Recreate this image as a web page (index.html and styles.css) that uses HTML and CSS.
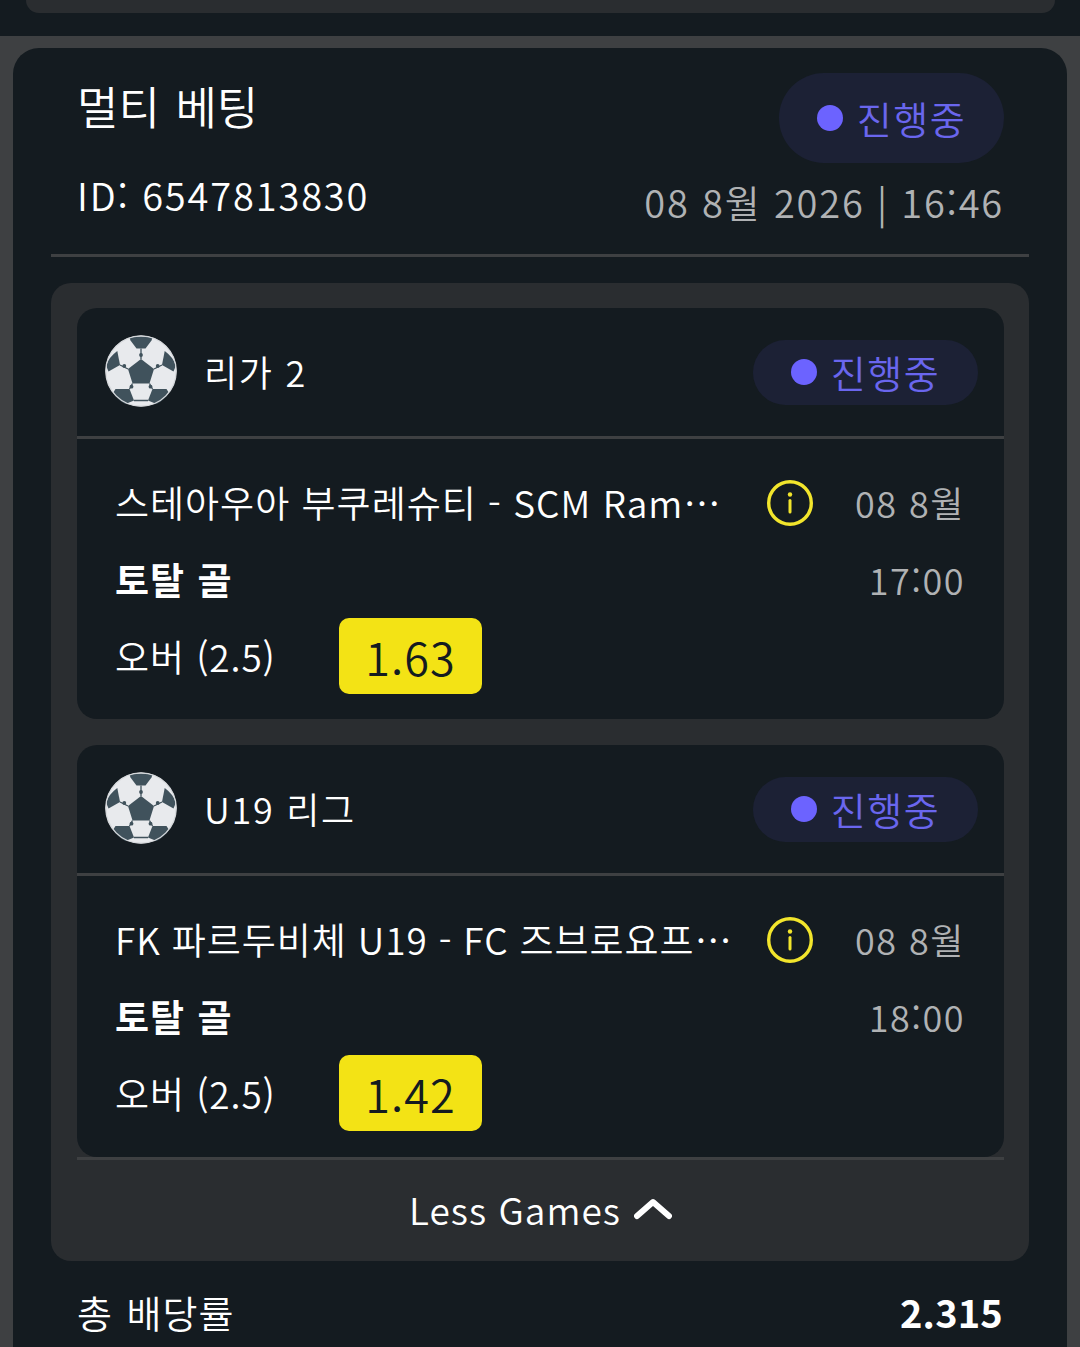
FILE: index.html
```html
<!DOCTYPE html>
<html lang="ko">
<head>
<meta charset="utf-8">
<title>멀티 베팅</title>
<link rel="stylesheet" href="styles.css">
</head>
<body>
<svg class="defs" width="0" height="0" aria-hidden="true">
  <defs>
    <symbol id="ball" viewBox="0 0 72 72">
      <circle cx="36" cy="36" r="35.5" fill="#e8eaed"/>
      <g fill="#40525c">
        <path d="M36 24 49 34 44.500 48.500H27.500L23 34Z"/>
        <path d="M24.500 2.500Q36 .5 47.500 2.500L46.500 5.500 40.500 13.500H31.500L25.500 5.500Z"/>
        <path d="M12.300 16 15 30 3.500 36.500Q1.500 32 1.500 30 4 22 12.300 16Z"/>
        <path d="M59.700 16 57 30 68.500 36.500Q70.500 32 70.500 30 68 22 59.700 16Z"/>
        <path d="M10.500 54H24.500L29 65.500 20.500 69Q12 64.500 8 58Z"/>
        <path d="M61.500 54H47.500L43 65.500 51.500 69Q60 64.500 64 58Z"/>
      </g>
      <g stroke="#40525c" stroke-width="1.300" fill="none">
        <path d="M36 13.500V24M15 30 23 34M57 30 49 34M24.500 54 27.500 48.500M47.500 54 44.500 48.500M29 65.500H43"/>
      </g>
      <g fill="#40525c">
        <circle cx="36" cy="20" r="1.900"/>
        <circle cx="19.300" cy="31" r="1.900"/>
        <circle cx="52.700" cy="31" r="1.900"/>
        <circle cx="26.500" cy="51.700" r="1.900"/>
        <circle cx="45.500" cy="51.700" r="1.900"/>
      </g>
      <circle cx="36" cy="36" r="35.200" fill="none" stroke="#d5d8db" stroke-width="1.300"/>
    </symbol>
    <symbol id="info" viewBox="0 0 46 46">
      <circle cx="23" cy="23" r="21.300" fill="none" stroke="#f2e52c" stroke-width="3.400"/>
      <circle cx="23" cy="14.500" r="2.200" fill="#f2e52c"/>
      <path d="M23 20.500V32" stroke="#f2e52c" stroke-width="3" stroke-linecap="round"/>
    </symbol>
  </defs>
</svg>

<div class="prev-strip"><div class="prev-card"></div></div>

<main class="ticket">
  <header class="ticket-head">
    <div class="ticket-titles">
      <h1 class="ticket-title">멀티 베팅</h1>
      <div class="ticket-id">ID: 6547813830</div>
    </div>
    <div class="ticket-meta">
      <div class="pill pill-lg"><span class="dot"></span><span class="pill-text">진행중</span></div>
      <div class="ticket-date">08 8월 2026 | 16:46</div>
    </div>
  </header>

  <section class="panel">
    <article class="game">
      <div class="game-head">
        <svg class="ball"><use href="#ball"/></svg>
        <span class="league">리가 2</span>
        <div class="pill pill-sm"><span class="dot"></span><span class="pill-text">진행중</span></div>
      </div>
      <div class="game-body">
        <div class="row row-match">
          <span class="match match-a">스테아우아 부쿠레슈티 - SCM Ramnicu Valcea</span>
          <svg class="info"><use href="#info"/></svg>
          <span class="when">08 8월</span>
        </div>
        <div class="row row-market">
          <span class="market">토탈 골</span>
          <span class="when">17:00</span>
        </div>
        <div class="row row-pick">
          <span class="pick">오버 (2.5)</span>
          <span class="odds">1.63</span>
        </div>
      </div>
    </article>

    <article class="game game-last">
      <div class="game-head">
        <svg class="ball"><use href="#ball"/></svg>
        <span class="league">U19 리그</span>
        <div class="pill pill-sm"><span class="dot"></span><span class="pill-text">진행중</span></div>
      </div>
      <div class="game-body">
        <div class="row row-match">
          <span class="match match-b">FK 파르두비체 U19 - FC 즈브로요프카 브르노 U19</span>
          <svg class="info"><use href="#info"/></svg>
          <span class="when">08 8월</span>
        </div>
        <div class="row row-market">
          <span class="market">토탈 골</span>
          <span class="when">18:00</span>
        </div>
        <div class="row row-pick">
          <span class="pick">오버 (2.5)</span>
          <span class="odds">1.42</span>
        </div>
      </div>
    </article>

    <div class="toggle">
      <span class="toggle-text">Less Games</span>
      <svg class="chevron" viewBox="0 0 38 22"><path d="M3 18 19 4 35 18" fill="none" stroke="#fff" stroke-width="6" stroke-linecap="round" stroke-linejoin="round"/></svg>
    </div>
  </section>

  <footer class="total">
    <span class="total-label">총 배당률</span>
    <span class="total-value">2.315</span>
  </footer>
</main>
</body>
</html>
```

FILE: styles.css
```css
* { box-sizing: border-box; }

html, body {
  margin: 0;
  height: 1347px;
  overflow: hidden;
}

body {
  background: #3e4042;
  color: #fff;
  font-family: "Noto Sans CJK KR", "Noto Sans", sans-serif;
  font-size: 38px;
  font-weight: 350;
}

.defs { position: absolute; }

.prev-strip {
  height: 36px;
  padding: 0 25px 0 26px;
  background: #141b20;
}

.prev-card {
  height: 13px;
  background: #2a2d30;
  border-radius: 0 0 16px 16px;
}

.ticket {
  margin: 12px 13px 0;
  padding: 0 38px;
  height: 1299px;
  background: #141b20;
  border-radius: 26px 26px 0 0;
}

.ticket-head {
  display: flex;
  justify-content: space-between;
  height: 209px;
  padding: 25px 25px 0 26px;
  border-bottom: 3px solid #3e4042;
}

.ticket-title {
  margin: 0;
  font-size: 45px;
  font-weight: 350;
  line-height: 66px;
  word-spacing: 3px;
}

.ticket-id {
  margin-top: 28px;
  font-size: 38px;
  line-height: 56px;
  letter-spacing: 1.85px;
}

.ticket-meta {
  display: flex;
  flex-direction: column;
  align-items: flex-end;
}

.ticket-date {
  margin-top: 11px;
  color: #b0b2b4;
  font-size: 38px;
  line-height: 56px;
  letter-spacing: 1.8px;
  white-space: nowrap;
}

.pill {
  display: flex;
  align-items: center;
  justify-content: center;
  gap: 14px;
  width: 225px;
  background: #1c2135;
}

.pill-lg { height: 90px; border-radius: 45px; }
.pill-sm { height: 65px; border-radius: 33px; margin: 2px 0 0 auto; }

.dot {
  width: 26px;
  height: 26px;
  border-radius: 50%;
  background: #6c63ff;
}

.pill-text {
  color: #6a66ee;
  font-size: 38px;
  line-height: 1;
  letter-spacing: 1.5px;
}

.panel {
  margin-top: 26px;
  padding: 25px 25px 0 26px;
  height: 978px;
  background: #2a2d30;
  border-radius: 20px;
}

.game {
  height: 411px;
  background: #141b20;
  border-radius: 20px;
  margin-bottom: 26px;
}

.game-last {
  height: 412px;
  margin-bottom: 0;
}

.game-head {
  display: flex;
  align-items: center;
  height: 131px;
  padding: 0 26px 2px 28px;
  border-bottom: 3px solid #3e4042;
}

.ball {
  width: 72px;
  height: 72px;
  margin-right: 27px;
}

.league {
  font-size: 36px;
  line-height: 52px;
  letter-spacing: 1.7px;
}

.game-body {
  padding: 25px 39px 0 38px;
}

.row {
  display: flex;
  align-items: center;
  justify-content: space-between;
}

.row-match { height: 76px; }
.row-market { height: 78px; }
.row-pick { height: 76px; justify-content: flex-start; }

.match {
  flex: none;
  font-size: 37px;
  line-height: 54px;
  letter-spacing: 1px;
  white-space: nowrap;
  overflow: hidden;
  text-overflow: ellipsis;
}

.match-a { width: 610px; }
.match-b { width: 622px; word-spacing: -.5px; }

.info {
  flex: none;
  width: 46px;
  height: 46px;
  margin: 2px 42px 0 auto;
}

.when {
  color: #b0b2b4;
  font-size: 36px;
  line-height: 52px;
  letter-spacing: 1.5px;
  white-space: nowrap;
}

.market {
  font-size: 37px;
  font-weight: 700;
  line-height: 54px;
  letter-spacing: 1px;
  word-spacing: 1px;
}

.pick {
  width: 224px;
  font-size: 37px;
  line-height: 54px;
  letter-spacing: .9px;
}

.odds {
  display: flex;
  align-items: center;
  justify-content: center;
  width: 143px;
  height: 76px;
  background: #f3e315;
  border-radius: 10px;
  color: #141b20;
  font-size: 45px;
  letter-spacing: 1px;
}

.toggle {
  display: flex;
  align-items: center;
  justify-content: center;
  gap: 13px;
  height: 104px;
  padding-bottom: 4px;
  border-top: 3px solid #3e4042;
  font-size: 37px;
}

.toggle-text { letter-spacing: 1px; }

.chevron {
  width: 38px;
  height: 22px;
}

.total {
  display: flex;
  align-items: center;
  justify-content: space-between;
  margin-top: 24px;
  padding: 0 26px;
  height: 52px;
}

.total-label { font-size: 38px; letter-spacing: 1px; word-spacing: 2px; }
.total-value { font-size: 38px; font-weight: 700; letter-spacing: .2px; }
```
